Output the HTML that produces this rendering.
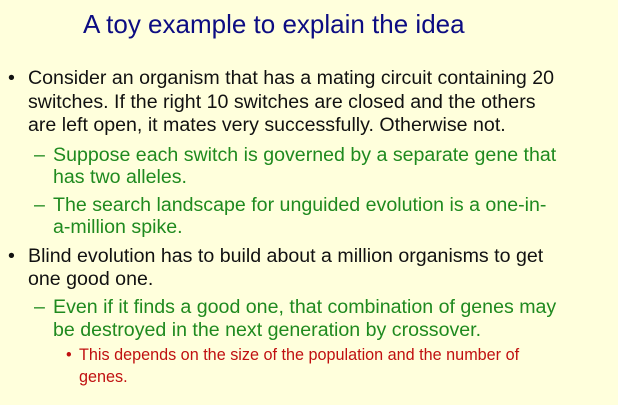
<!DOCTYPE html>
<html><head><style>
body{margin:0;width:618px;height:405px;background:#ffffdc;font-family:"Liberation Sans",Arial,sans-serif;position:relative;overflow:hidden}
div{position:absolute;white-space:nowrap}
.t{left:83px;top:9px;font-size:26px;color:#0c0c82}
.b{font-size:19.6px;color:#111}
.g{font-size:19.6px;color:#1f8a1f}
.r{font-size:16.2px;color:#c01010}
</style></head><body>
<div class="t">A toy example to explain the idea</div>
<div class="b" style="left:8px;top:67px">•</div>
<div class="b" style="left:28px;top:67px">Consider an organism that has a mating circuit containing 20</div>
<div class="b" style="left:28px;top:91px">switches. If the right 10 switches are closed and the others</div>
<div class="b" style="left:28px;top:114px">are left open, it mates very successfully. Otherwise not.</div>
<div class="g" style="left:34px;top:144px">–</div>
<div class="g" style="left:53px;top:144px">Suppose each switch is governed by a separate gene that</div>
<div class="g" style="left:53px;top:166px">has two alleles.</div>
<div class="g" style="left:34px;top:194px">–</div>
<div class="g" style="left:53px;top:194px">The search landscape for unguided evolution is a one-in-</div>
<div class="g" style="left:53px;top:216px">a-million spike.</div>
<div class="b" style="left:8px;top:245px">•</div>
<div class="b" style="left:28px;top:245px">Blind evolution has to build about a million organisms to get</div>
<div class="b" style="left:28px;top:268px">one good one.</div>
<div class="g" style="left:34px;top:296px">–</div>
<div class="g" style="left:53px;top:296px">Even if it finds a good one, that combination of genes may</div>
<div class="g" style="left:53px;top:319px">be destroyed in the next generation by crossover.</div>
<div class="r" style="left:66px;top:346px">•</div>
<div class="r" style="left:79px;top:346px">This depends on the size of the population and the number of</div>
<div class="r" style="left:79px;top:368px">genes.</div>
</body></html>
